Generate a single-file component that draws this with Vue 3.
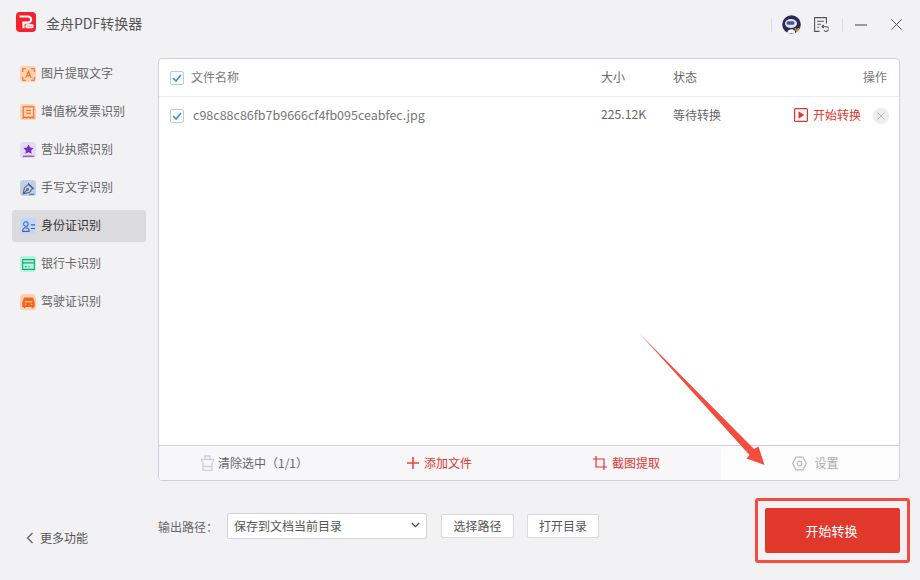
<script setup>
const menu = [
  { name: '图片提取文字', tint: '#ffd2b8', color: '#f5660f', icon: 'text' },
  { name: '增值税发票识别', tint: '#ffd2b8', color: '#f5660f', icon: 'bill' },
  { name: '营业执照识别', tint: '#e5dbf6', color: '#6f35b8', icon: 'star' },
  { name: '手写文字识别', tint: '#c2cfe4', color: '#4d5f8e', icon: 'pen' },
  { name: '身份证识别', tint: '#bfd8fc', color: '#46609c', icon: 'id', active: true },
  { name: '银行卡识别', tint: '#b4f4de', color: '#0fa874', icon: 'card' },
  { name: '驾驶证识别', tint: '#ffd2b8', color: '#f5641a', icon: 'car' }
]
</script>

<template>
  <div class="app">
    <header class="titlebar">
      <div class="brand">
        <svg class="logo" width="20" height="20" viewBox="0 0 20 20">
          <rect width="20" height="20" rx="4" fill="#f5222d" />
          <path d="M3.500 4.500h8.500a3 3 0 0 1 0 6.200H7.500v5.500" fill="none" stroke="#fff" stroke-width="2.200" />
          <rect x="9.500" y="12.300" width="8" height="4" rx="1.300" fill="#fff" />
          <path d="M11 14.300h5" stroke="#f7a5a5" stroke-width="1.200" />
        </svg>
        <span class="app-name">金舟PDF转换器</span>
      </div>
      <div class="win-tools">
        <span class="sep"></span>
        <svg class="avatar" width="19" height="19" viewBox="0 0 19 19">
          <circle cx="9.500" cy="9.500" r="9.300" fill="#2c2858" />
          <ellipse cx="9" cy="8.500" rx="6" ry="4.500" fill="#dfe2ee" />
          <rect x="4.500" y="6.300" width="8" height="3.400" rx="1.700" fill="#41558f" />
          <path d="M5 18c.5-4 6-5 8-2v2.500z" fill="#f0f0f5" />
          <path d="M12.500 13l2.300 5 2.700-5h-1.700l-1 2.300-1-2.300z" fill="#f59a23" />
        </svg>
        <svg class="note" width="15" height="15" viewBox="0 0 15 15" fill="none" stroke="#555" stroke-width="1.100">
          <path d="M5.500 14.400H.6V.6h11.800v6" />
          <path d="M3.200 4.300h6.600M3.200 7.200h3.600M3.200 10.200h1.800" />
          <path d="M8 9.700h4.500a2 2 0 0 1 2 1.800M9.700 8l-1.700 1.700 1.700 1.400M14.400 12.300a2.400 2.400 0 0 1-2.300 2.100 2.600 2.600 0 0 1-2.200-1.100" />
        </svg>
        <span class="sep sep-right"></span>
        <svg class="min" width="12" height="12" viewBox="0 0 12 12"><path d="M0 6h12" stroke="#555" stroke-width="1.100" /></svg>
        <svg class="close" width="11" height="11" viewBox="0 0 11 11"><path d="M.3.300l10.400 10.400M10.700.300L.3 10.700" stroke="#555" stroke-width="1" /></svg>
      </div>
    </header>

    <div class="content">
      <aside class="sidebar">
        <nav class="menu">
          <a v-for="item in menu" :key="item.name" class="menu-item" :class="{ active: item.active }">
            <span class="menu-icon" :style="{ backgroundColor: item.tint }">
              <svg width="13" height="13" viewBox="0 0 16 16" fill="none" :stroke="item.color" stroke-width="1.300">
                <g v-if="item.icon === 'text'">
                  <path d="M1 5V1h4M11 1h4v4M15 11v4h-4M5 15H1v-4" />
                  <path d="M4.800 12L8 4l3.200 8M6 9.500h4" />
                </g>
                <g v-else-if="item.icon === 'bill'">
                  <path d="M1.500 1h13v14l-2.200-1.500L10 15l-2-1.500L6 15l-2.300-1.500L1.500 15z" />
                  <path d="M5 5.500h6M5 9h6" />
                </g>
                <g v-else-if="item.icon === 'star'">
                  <path d="M8 .5l2 3.900 4.200.6-3 2.900.7 4L8 10l-3.900 1.900.7-4-3-2.900 4.200-.6z" :fill="item.color" stroke="none" />
                  <path d="M1 15h14" />
                </g>
                <g v-else-if="item.icon === 'pen'">
                  <path d="M1.500 14.500L3 7l5-4 5 5-4 5z" />
                  <path d="M1.500 14.500L6.500 9.500M7.500 1.500l7 7M9 15h6" />
                  <circle cx="7" cy="9" r="1" />
                </g>
                <g v-else-if="item.icon === 'id'">
                  <circle cx="4.800" cy="5" r="2.800" />
                  <path d="M.8 14c0-6 8-6 8 0zM11 6h5M11 10.500h5" />
                </g>
                <g v-else-if="item.icon === 'card'">
                  <path d="M.8 2h14.400v12H.8z" />
                  <path d="M.8 6h14.400M3.500 10.800h2.500M8 10.800h1.500" />
                </g>
                <g v-else>
                  <path d="M1 8l2-5.500h10L15 8v5H1z" :fill="item.color" />
                  <path d="M3 13v2M13 13v2" stroke-width="2.200" />
                  <path d="M3.500 7h9" stroke="#ffd2b8" />
                  <path d="M3.500 10.200h2M10.500 10.200h2" stroke="#ffd2b8" />
                </g>
              </svg>
            </span>
            <span class="menu-text">{{ item.name }}</span>
          </a>
        </nav>
        <a class="more">
          <svg width="8" height="12" viewBox="0 0 8 12" fill="none"><path d="M6.500 1L1.500 6l5 5" stroke="#555" stroke-width="1.100" /></svg>
          更多功能
        </a>
      </aside>

      <main class="main">
        <section class="panel">
          <div class="row head">
            <span class="checkbox"><svg width="10" height="8" viewBox="0 0 10 8" fill="none"><path d="M1 4l3 3 5-6" stroke="#1e96f5" stroke-width="1.600" /></svg></span>
            <span class="col-name head-name">文件名称</span>
            <span class="col-size">大小</span>
            <span class="col-state">状态</span>
            <span class="col-action">操作</span>
          </div>
          <div class="row file">
            <span class="checkbox"><svg width="10" height="8" viewBox="0 0 10 8" fill="none"><path d="M1 4l3 3 5-6" stroke="#1e96f5" stroke-width="1.600" /></svg></span>
            <span class="col-name file-name">c98c88c86fb7b9666cf4fb095ceabfec.jpg</span>
            <span class="col-size file-size">225.12K</span>
            <span class="col-state">等待转换</span>
            <span class="col-action start">
              <svg width="14" height="14" viewBox="0 0 14 14"><rect x=".6" y=".6" width="12.800" height="12.800" rx="1" fill="none" stroke="#e0362c" stroke-width="1.200" /><path d="M4.500 3.300l5.800 3.700-5.800 3.700z" fill="#e0362c" /></svg>
              开始转换
            </span>
            <span class="remove"><svg width="8" height="8" viewBox="0 0 8 8"><path d="M.5.500l7 7M7.500.500l-7 7" stroke="#b5b7c0" stroke-width="1" /></svg></span>
          </div>
          <div class="list-space"></div>
          <div class="toolbar">
            <a class="tool clear">
              <svg width="13" height="16" viewBox="0 0 13 16" fill="none" stroke="#cfcfd4" stroke-width="1.300"><path d="M4 4V1h5v3M.5 7V4.500h12V7M2 7v8.400h9V7M2 11.500h9" /></svg>
              <span class="tool-text">清除选中（1/1）</span>
            </a>
            <a class="tool red add">
              <svg width="12" height="12" viewBox="0 0 12 12"><path d="M6 0v12M0 6h12" stroke="#f0453a" stroke-width="1.600" /></svg>
              <span class="tool-text">添加文件</span>
            </a>
            <a class="tool red crop">
              <svg width="14" height="14" viewBox="0 0 14 14" fill="none" stroke="#e0362c" stroke-width="1.200"><path d="M3 0v11h11M0 3h11v11" /></svg>
              <span class="tool-text">截图提取</span>
            </a>
            <a class="tool setting">
              <svg width="15" height="15" viewBox="0 0 15 15" fill="none" stroke="#b8b8be" stroke-width="1.200"><path d="M4 1.200h7l3.300 6.300-3.300 6.300H4L.7 7.500z" /><circle cx="7.500" cy="7.500" r="2.300" /></svg>
              <span class="tool-text">设置</span>
            </a>
          </div>
        </section>

        <div class="output">
          <label class="output-label">输出路径：</label>
          <div class="select">
            保存到文档当前目录
            <svg width="9" height="6" viewBox="0 0 9 6" fill="none"><path d="M.8 1l3.700 3.700L8.200 1" stroke="#444" stroke-width="1.200" /></svg>
          </div>
          <button class="plain-btn">选择路径</button>
          <button class="plain-btn open">打开目录</button>
          <div class="start-frame"><button class="start-btn">开始转换</button></div>
        </div>
      </main>
    </div>

    <!-- arrow annotation over the screenshot -->
    <svg class="arrow" width="920" height="580" viewBox="0 0 920 580">
      <path d="M640 334L754 449 758.500 446.500 764.500 465 746.500 458.500 749.500 455z" fill="#f44c3f" />
    </svg>
  </div>
</template>

<style scoped>
.app {
  position: relative;
  width: 920px;
  height: 580px;
  display: flex;
  flex-direction: column;
  overflow: hidden;
  background-color: #f2f2f5;
  color: #666;
  font-family: "Noto Sans CJK SC", "Noto Sans", sans-serif;
  font-size: 12px;
}

.titlebar {
  height: 58px;
  flex: none;
  display: flex;
  align-items: flex-start;
  justify-content: space-between;
}

.brand {
  display: flex;
  align-items: center;
  padding: 12px 0 0 16px;
}

.app-name {
  margin-left: 10px;
  font-size: 14px;
  color: #555;
  position: relative;
  top: 1px;
}

.win-tools {
  display: flex;
  align-items: center;
  padding-top: 15px;
  margin-right: 18px;
}

.sep {
  width: 1px;
  height: 14px;
  background-color: #dcdce2;
  margin-right: 10px;
}

.note {
  margin-left: 13px;
}

.sep-right {
  margin: 0 0 0 13px;
}

.min {
  margin-left: 12px;
}

.close {
  margin-left: 24px;
}

.content {
  flex: 1;
  display: flex;
  min-height: 0;
}

.sidebar {
  width: 158px;
  flex: none;
  display: flex;
  flex-direction: column;
  justify-content: space-between;
  padding-left: 12px;
  box-sizing: border-box;
}

.menu {
  display: flex;
  flex-direction: column;
  gap: 6px;
  width: 134px;
}

.menu-item {
  height: 32px;
  display: flex;
  align-items: center;
  gap: 5px;
  padding-left: 8px;
  border-radius: 3px;
  color: #666;
  white-space: nowrap;
}

.menu-item.active {
  background-color: #dbdbdd;
  color: #333;
}

.menu-text {
  margin-top: -3px;
}

.menu-icon {
  width: 16px;
  height: 16px;
  border-radius: 3px;
  display: flex;
  align-items: center;
  justify-content: center;
}

.more {
  display: flex;
  align-items: center;
  gap: 6px;
  padding: 0 0 34px 14px;
  color: #555;
}

.main {
  flex: 1;
  min-width: 0;
  padding-right: 20px;
  display: flex;
  flex-direction: column;
}

.panel {
  height: 423px;
  box-sizing: border-box;
  border: 1px solid #cfcfdf;
  border-radius: 4px;
  background-color: #fff;
  display: flex;
  flex-direction: column;
  overflow: hidden;
}

.row {
  display: flex;
  align-items: center;
  padding-left: 11px;
  flex: none;
}

.head {
  height: 37px;
  border-bottom: 1px solid #ececf0;
}

.file {
  height: 37px;
}

.checkbox {
  width: 12px;
  height: 12px;
  border: 1px solid #c8c8cc;
  border-radius: 2px;
  display: flex;
  align-items: center;
  justify-content: center;
  flex: none;
}

.col-name {
  width: 408px;
  margin-left: 9px;
  margin-top: -3px;
  flex: none;
  color: #777;
}

.head-name {
  margin-left: 7px;
  margin-top: -2px;
  width: 410px;
}

.file-name {
  font-size: 12.5px;
}

.col-size {
  width: 72px;
  margin-top: -2px;
  flex: none;
}

.file-size {
  font-size: 12.2px;
  margin-top: -3px;
}

.col-state {
  width: 120px;
  margin-top: -2px;
  flex: none;
}

.col-action {
  margin-left: auto;
  margin-top: -2px;
  padding-right: 12px;
  color: #777;
}

.start {
  display: flex;
  align-items: center;
  gap: 5px;
  padding-right: 0;
  color: #e0362c;
}

.remove {
  width: 16px;
  height: 16px;
  margin: 0 10px 0 12px;
  border-radius: 50%;
  background-color: #ececf1;
  display: flex;
  align-items: center;
  justify-content: center;
}

.list-space {
  flex: 1;
}

.toolbar {
  height: 35px;
  box-sizing: border-box;
  flex: none;
  border-top: 1px solid #cfcfdf;
  display: grid;
  grid-template-columns: 188px 187px 187px 1fr;
  background-color: #f7f7fa;
}

.tool {
  display: flex;
  align-items: center;
  justify-content: center;
  gap: 5px;
  color: #666;
}

.tool-text {
  margin-top: -2px;
}

.tool.clear {
  padding-left: 3px;
  gap: 4px;
}

.tool.red {
  color: #e0362c;
}

.tool.add,
.tool.crop {
  padding-right: 2px;
}

.tool.setting {
  background-color: #fcfcfd;
  color: #aaa;
  gap: 7px;
  padding-left: 11px;
}

.output {
  flex: 1;
  display: flex;
  align-items: center;
  padding-bottom: 9px;
}

.output-label {
  width: 69px;
  flex: none;
  color: #666;
}

.select {
  width: 200px;
  height: 26px;
  box-sizing: border-box;
  border: 1px solid #d2d2dc;
  border-radius: 2px;
  background-color: #fff;
  padding: 0 6px 2px 6px;
  display: flex;
  align-items: center;
  justify-content: space-between;
  color: #555;
}

.plain-btn {
  width: 73px;
  height: 24px;
  margin-left: 14px;
  padding: 0 0 2px;
  border: 1px solid #d8d8e0;
  border-radius: 2px;
  background-color: #fff;
  font: inherit;
  color: #555;
}

.open {
  width: 72px;
  margin-left: 13px;
}

.start-frame {
  margin-left: auto;
  margin-right: -10px;
  margin-top: 9px;
  padding: 7px;
  border: 3px solid #f44c3f;
  border-radius: 3px;
  display: flex;
}

.start-btn {
  width: 135px;
  height: 45px;
  padding: 0 2px 0 0;
  border: none;
  border-radius: 2px;
  background-color: #e1382c;
  color: #fff;
  font: inherit;
  font-size: 13px;
}

.arrow {
  position: absolute;
  left: 0;
  top: 0;
  pointer-events: none;
}
</style>
